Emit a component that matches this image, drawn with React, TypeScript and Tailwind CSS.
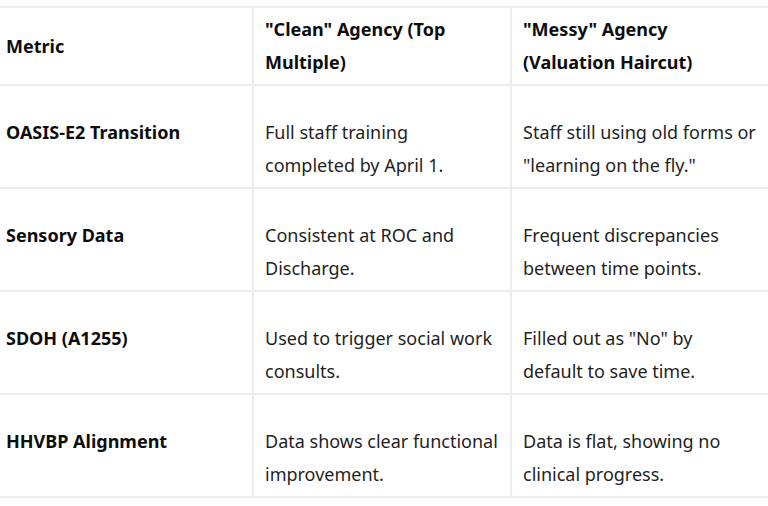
const rows: string[][][] = [
  [["OASIS-E2 Transition"], ["Full staff training", "completed by April 1."], ["Staff still using old forms or", "\"learning on the fly.\""]],
  [["Sensory Data"], ["Consistent at ROC and", "Discharge."], ["Frequent discrepancies", "between time points."]],
  [["SDOH (A1255)"], ["Used to trigger social work", "consults."], ["Filled out as \"No\" by", "default to save time."]],
  [["HHVBP Alignment"], ["Data shows clear functional", "improvement."], ["Data is flat, showing no", "clinical progress."]],
];

function Lines({ lines }: { lines: string[] }) {
  return (
    <>
      {lines.map((l, i) => (
        <span key={i} className="block whitespace-nowrap">{l}</span>
      ))}
    </>
  );
}

export default function App() {
  return (
    <div className="w-[768px] h-[506px] overflow-hidden bg-white pt-[6px]" style={{ fontFamily: '"Noto Sans", "Open Sans", sans-serif' }}>
      <table className="border-collapse table-fixed w-[774px] text-[18px] leading-[33px] text-[#1f1f1f]">
        <colgroup>
          <col className="w-[253px]" />
          <col className="w-[258px]" />
          <col className="w-[263px]" />
        </colgroup>
        <thead>
          <tr className="border-y-2 border-[#ececf0]">
            <th className="text-left align-middle font-bold text-[#0d0d0d] pl-[6px] pr-[11px] py-[5px]">Metric</th>
            <th className="text-left align-middle font-bold text-[#0d0d0d] px-[11px] py-[5px] border-l-2 border-[#ececf0]">
              <Lines lines={["\"Clean\" Agency (Top", "Multiple)"]} />
            </th>
            <th className="text-left align-middle font-bold text-[#0d0d0d] px-[11px] py-[5px] border-l-2 border-[#ececf0]">
              <Lines lines={["\"Messy\" Agency", "(Valuation Haircut)"]} />
            </th>
          </tr>
        </thead>
        <tbody>
          {rows.map((r, i) => (
            <tr key={i} className="border-b-2 border-[#ececf0]">
              <td className="align-top font-bold text-[#0d0d0d] pl-[6px] pr-[11px] pt-[30px] pb-[5px]"><Lines lines={r[0]} /></td>
              <td className="align-top px-[11px] pt-[30px] pb-[5px] border-l-2 border-[#ececf0]"><Lines lines={r[1]} /></td>
              <td className="align-top px-[11px] pt-[30px] pb-[5px] border-l-2 border-[#ececf0]"><Lines lines={r[2]} /></td>
            </tr>
          ))}
        </tbody>
      </table>
    </div>
  );
}
